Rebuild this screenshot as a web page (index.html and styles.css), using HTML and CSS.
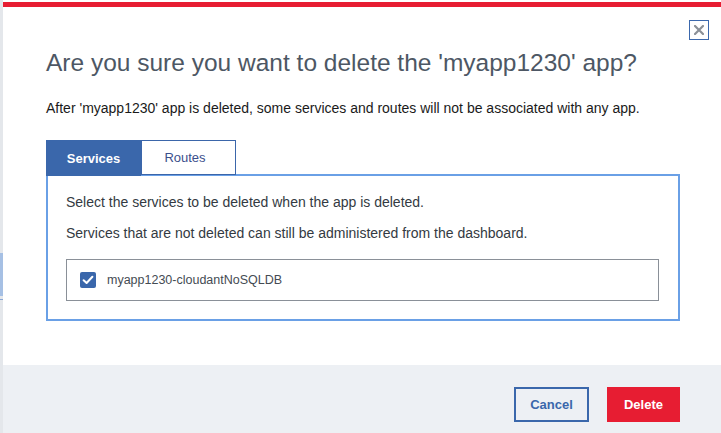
FILE: index.html
```html
<!DOCTYPE html>
<html lang="en">
<head>
<meta charset="utf-8">
<title>Delete app</title>
<link rel="stylesheet" href="styles.css">
</head>
<body>
<div class="backdrop">
  <div class="bg-gap1"></div>
  <div class="bg-frag bg-frag-blue"></div>
  <div class="bg-line"></div>
</div>
<div class="modal">
  <div class="redbar"></div>
  <button class="close" aria-label="Close">
    <svg width="10" height="10" viewBox="0 0 10 10"><path d="M1 1L9 9M9 1L1 9" stroke="#8b9097" stroke-width="2.2" stroke-linecap="square"/></svg>
  </button>
  <div class="body">
    <h1 class="title">Are you sure you want to delete the 'myapp1230' app?</h1>
    <p class="subtitle">After 'myapp1230' app is deleted, some services and routes will not be associated with any app.</p>
    <div class="tabs">
      <div class="tab tab-active">Services</div>
      <div class="tab tab-routes">Routes</div>
    </div>
    <div class="panel">
      <p class="panel-text">Select the services to be deleted when the app is deleted.</p>
      <p class="panel-text second">Services that are not deleted can still be administered from the dashboard.</p>
      <div class="item">
        <span class="checkbox">
          <svg width="16" height="16" viewBox="0 0 16 16"><path d="M3.6 8.2L6.6 11L12.4 4.8" fill="none" stroke="#fff" stroke-width="2" stroke-linecap="round" stroke-linejoin="round"/></svg>
        </span>
        <span class="item-label">myapp1230-cloudantNoSQLDB</span>
      </div>
    </div>
  </div>
  <div class="footer">
    <button class="btn btn-secondary">Cancel</button>
    <button class="btn btn-danger">Delete</button>
  </div>
</div>
</body>
</html>
```
FILE: styles.css
```css
* { box-sizing: border-box; }
html, body { margin: 0; padding: 0; }
body {
  width: 721px;
  height: 433px;
  overflow: hidden;
  display: flex;
  background: #e4e7eb;
  font-family: "Liberation Sans", Arial, sans-serif;
}
.backdrop {
  width: 3px;
  flex: none;
  display: flex;
  flex-direction: column;
}
.bg-gap1 { height: 253px; }
.bg-frag-blue { height: 43px; background: #a6c0e4; }
.bg-line { height: 1px; margin-top: 3px; background: #8aa7d6; }
.modal {
  flex: 1;
  position: relative;
  background: #fff;
  display: flex;
  flex-direction: column;
  padding-top: 2px;
}
.redbar {
  height: 5px;
  background: #e71d32;
  flex: none;
}
.close {
  position: absolute;
  top: 20px;
  right: 12px;
  width: 20px;
  height: 20px;
  padding: 0;
  border: 1px solid #3b68ad;
  background: #fff;
  display: flex;
  align-items: center;
  justify-content: center;
}
.close svg { display: block; }
.body {
  flex: 1;
  padding: 41px 41px 0 43px;
}
.title {
  margin: 0;
  font-size: 24.5px;
  line-height: 30px;
  font-weight: normal;
  color: #4d5764;
  white-space: nowrap;
}
.subtitle {
  margin: 20px 0 0;
  font-size: 14px;
  line-height: 20px;
  color: #1a1a1a;
  white-space: nowrap;
}
.tabs {
  display: flex;
  margin-top: 22px;
  height: 36px;
  margin-bottom: -2px;
  position: relative;
  z-index: 1;
}
.tab {
  width: 95px;
  height: 35px;
  display: flex;
  align-items: center;
  justify-content: center;
  font-size: 13px;
  color: #3c4f8c;
  background: #fff;
  border: 1px solid #3b66aa;
}
.tab-routes { padding-right: 7px; }
.tab-active {
  background: #3a67ab;
  color: #fff;
  font-weight: bold;
  height: 36px;
  border: none;
}
.panel {
  border: 2px solid #6aa0e6;
  padding: 16px 19px 18px 18px;
}
.panel-text {
  margin: 0;
  font-size: 14px;
  line-height: 20px;
  color: #333a42;
}
.panel-text.second { margin-top: 11px; }
.item {
  margin-top: 16px;
  height: 42px;
  border: 1px solid #8a9098;
  display: flex;
  align-items: center;
  padding-left: 13px;
}
.checkbox {
  width: 16px;
  height: 16px;
  border-radius: 2px;
  background: #3a67ab;
  display: flex;
}
.item-label {
  margin-left: 11px;
  font-size: 12.5px;
  color: #444b53;
}
.footer {
  height: 68px;
  flex: none;
  background: #edf0f4;
  display: flex;
  justify-content: flex-end;
  align-items: flex-start;
  padding: 22px 41px 0 0;
  gap: 18px;
}
.btn {
  height: 35px;
  font-family: "Liberation Sans", Arial, sans-serif;
  font-size: 13px;
  font-weight: bold;
  padding: 0;
  cursor: pointer;
}
.btn-secondary {
  width: 75px;
  background: transparent;
  border: 2px solid #3a67ab;
  color: #3a67ab;
}
.btn-danger {
  width: 73px;
  background: #e71d32;
  border: none;
  color: #fff;
}
```
